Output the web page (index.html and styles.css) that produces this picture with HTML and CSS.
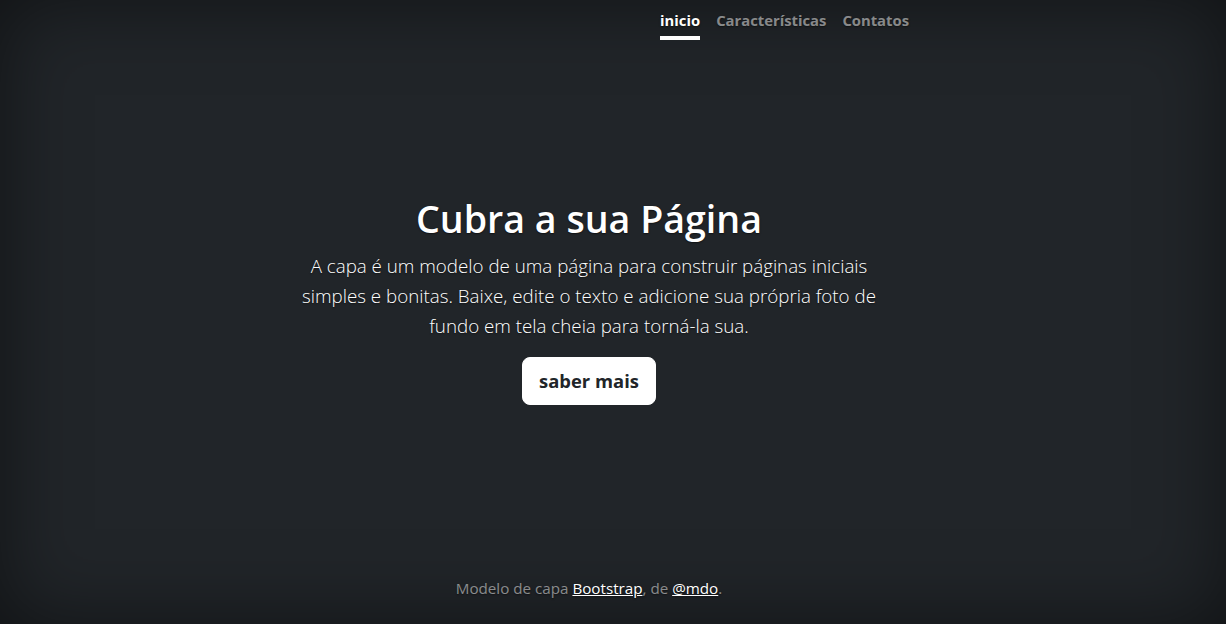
FILE: index.html
```html
<!DOCTYPE html>
<html lang="pt-br">
<head>
<meta charset="utf-8">
<title>Cover</title>
<link rel="stylesheet" href="styles.css">
</head>
<body>
<div class="cover">
  <header class="masthead">
    <nav class="nav">
      <a class="nav-link active" href="#">inicio</a>
      <a class="nav-link" href="#">Características</a>
      <a class="nav-link" href="#">Contatos</a>
    </nav>
  </header>
  <main class="hero">
    <h1 class="title">Cubra a sua Página</h1>
    <p class="lead">A capa é um modelo de uma página para construir páginas iniciais simples e bonitas. Baixe, edite o texto e adicione sua própria foto de fundo em tela cheia para torná-la sua.</p>
    <p class="cta"><a href="#" class="btn">saber mais</a></p>
  </main>
  <footer class="foot">
    <p>Modelo de capa <a href="#">Bootstrap</a>, de <a href="#">@mdo</a>.</p>
  </footer>
</div>
</body>
</html>
```
FILE: styles.css
```css
html, body {
  height: 100%;
  margin: 0;
}
body {
  background: #212529;
  box-shadow: inset 0 0 5rem rgba(0,0,0,.5);
  color: #fff;
  font-family: "Open Sans", "Noto Sans", sans-serif;
  text-shadow: 0 .05rem .1rem rgba(0,0,0,.5);
  padding-right: 48px;
  box-sizing: border-box;
}
.cover {
  width: 672px;
  height: 100%;
  margin: 0 auto;
  box-sizing: border-box;
  padding: 8px 16px 24px;
  display: flex;
  flex-direction: column;
  text-align: center;
}
.masthead {
  display: flex;
  justify-content: flex-end;
}
.nav {
  display: flex;
  gap: 16px;
}
.nav-link {
  font-size: 14.8px;
  font-weight: 700;
  line-height: 24px;
  padding: 0 0 4px;
  color: rgba(255,255,255,.5);
  text-decoration: none;
  border-bottom: 4px solid transparent;
}
.nav-link.active {
  color: #fff;
  border-bottom-color: #fff;
}
.hero {
  margin: auto 0;
  padding: 0 16px;
}
.title {
  margin: 0 0 8px;
  font-size: 37.6px;
  font-weight: 600;
  line-height: 48px;
}
.lead {
  margin: 0 0 16px;
  font-size: 18.75px;
  font-weight: 300;
  line-height: 30px;
}
.cta {
  margin: 0 0 16px;
}
.btn {
  display: inline-block;
  background: #fff;
  color: #212529;
  font-size: 18.4px;
  font-weight: 700;
  line-height: 30px;
  padding: 8px 16px;
  border: 1px solid #fff;
  border-radius: 8px;
  text-decoration: none;
  text-shadow: none;
}
.foot {
  color: rgba(255,255,255,.5);
  font-size: 15.2px;
  line-height: 24px;
}
.foot p {
  margin: 0;
}
.foot a {
  color: #fff;
  text-decoration: underline;
}
```
